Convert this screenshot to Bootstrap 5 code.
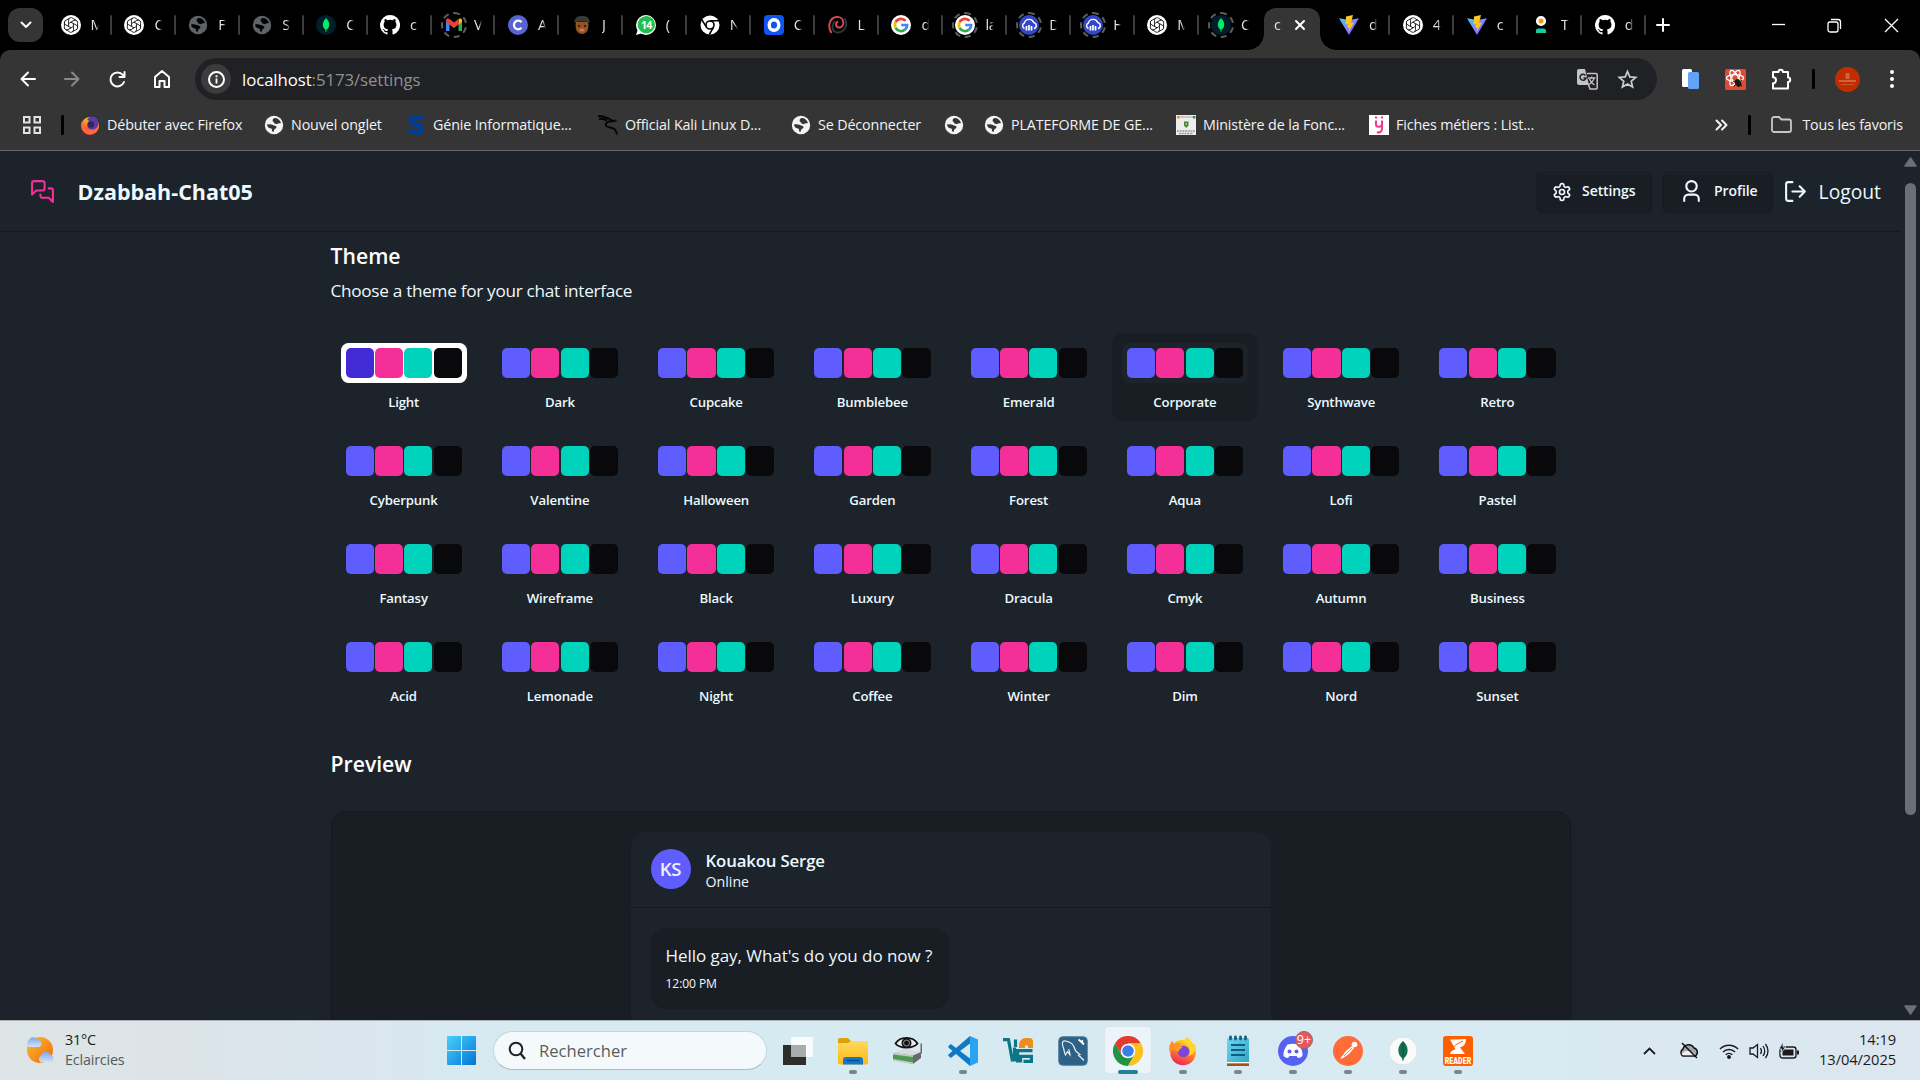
<!DOCTYPE html>
<html lang="fr" data-bs-theme="dark">
<head>
<meta charset="utf-8">
<title>Dzabbah-Chat05</title>
<link href="https://cdn.jsdelivr.net/npm/bootstrap@5.3.0/dist/css/bootstrap.min.css" rel="stylesheet">
<style>
body{width:1920px;height:1080px;overflow:hidden;font-family:"Open Sans","Noto Sans",sans-serif;background:#1d232a;color:#fff;line-height:1.3}
svg{display:block;flex:none;overflow:visible}
.i20{width:20px;height:20px}.i25{width:25px;height:25px}.i30{width:30px;height:30px}
.ln{fill:none;stroke:currentColor;stroke-width:2;stroke-linecap:round;stroke-linejoin:round}
/* browser tab strip */
.tabstrip{height:50px;background:#000}
.tabsearch{width:35px;height:34px;border-radius:12px;background:#353535;margin:8px 5px 8px 8px}
.btab{width:63.93px;height:50px;padding-left:12.5px}
.btab .ttl{width:8px;margin-left:10px;overflow:hidden;font-size:14.5px;color:#e3e3e3;-webkit-mask-image:linear-gradient(90deg,#000 60%,transparent)}
.btab .ttl.narrow{letter-spacing:-.4px;width:9px}
.btab.split::after{content:"";width:2px;height:20px;background:#3c3c3c;margin-left:auto;border-radius:1px}
.asleep{outline:2px dashed #5c5f62;outline-offset:1px;border-radius:50%}
.btab.current{width:56px;margin:8px 6.500px 0 1.430px;height:42px;padding-left:10px;background:#353535;border-radius:12px 12px 0 0;position:relative}
.btab.current .ttl{margin:-8px 0 0}
.btab.current .tabclose{margin:-8px 0 0 13px}
.btab.current::before,.btab.current::after{content:"";position:absolute;bottom:0;width:16px;height:16px}
.btab.current::before{left:-16px;background:radial-gradient(circle at 0 0,#000 15.5px,#353535 16px)}
.btab.current::after{right:-16px;background:radial-gradient(circle at 100% 0,#000 15.5px,#353535 16px)}
.winbtns{gap:41px;margin-right:21px}
/* toolbar and bookmarks */
.chrome-ui{background:#000}
.toolbar-ui{height:58px;background:#353535;border-radius:10px 10px 0 0;padding:0 20px}
.omnibox{width:1462px;height:42px;border-radius:21px;background:#202124;padding:0 20px 0 6px;margin-left:25px}
.site-info{width:30px;height:30px;background:#3c3c3c}
.url{font-size:16.8px;color:#8f9092;letter-spacing:-.08px;margin-left:11px;padding-top:1px}
.url span{color:#fff}
.vbar{width:3px;height:20px;background:#000;border-radius:1px}
.favbar{height:43px;background:#353535;border-bottom:1px solid #666;padding-bottom:9px;font-size:14.3px;color:#f1f3f4;letter-spacing:-.13px}
.fav{gap:7px;white-space:nowrap;height:33px}
.fav span{padding-top:1px}
/* page */
.page{height:869px;overflow:hidden;background:#1d232a;color:#ecf9ff}
.view{width:1901px}
.appnav{height:81px;border-bottom:1px solid #15191e;padding:1px 20px 0 30px}
.brandname{font-size:21.5px;font-weight:700;letter-spacing:0;margin-left:22.5px}
.navbtn{height:40px;background:#191e24;border:1px solid #161a20;border-radius:5px;font-size:14px;font-weight:600;box-shadow:inset 0 1px 0 #21262d,0 2px 3px -1px #15191e80;letter-spacing:-.1px}
.logout{font-size:19.3px}
.content{width:1240px;margin:0 auto;padding-top:7px}
.h-sec{font-size:21.2px;font-weight:600;line-height:34px;margin:0}
.subt{font-size:17.2px;letter-spacing:-.3px;line-height:28px;margin:4px 0 28px}
.themes{display:grid;grid-template-columns:repeat(8,1fr);gap:10px;margin-bottom:32px}
.tile{height:88px;padding:10px;border-radius:10px;text-align:center}
.tile.hov{background:#191e24}
.sw{height:40px;padding:5px;border-radius:7.5px;display:grid;grid-template-columns:repeat(4,1fr);gap:1.25px;background:#1d232a}
.sw i{border-radius:5px}
.sw i:nth-child(1){background:#605dff}.sw i:nth-child(2){background:#f43098}.sw i:nth-child(3){background:#00d3bb}.sw i:nth-child(4){background:#09090b}
.sw.lit{background:#fff}.sw.lit i:nth-child(1){background:#422ad5}
.tname{font-size:13.2px;font-weight:600;line-height:20px;margin-top:9px;letter-spacing:-.15px}
.panel{height:300px;margin-top:30px;background:#191e24;border:1px solid #15191e;border-radius:15px;padding-top:20px;box-shadow:0 12px 19px -4px #0000001a}
.chatcard{width:640px;height:300px;margin:0 auto;background:#1d232a;border-radius:15px}
.chathead{height:76px;padding:0 20px 2px;border-bottom:1px solid #15191e;gap:15px}
.avatar{width:40px;height:40px;background:#605dff;font-size:18.5px;font-weight:600;color:#edf1fe;letter-spacing:-.2px;padding-top:1px}
.chatname{font-size:16.8px;font-weight:600;line-height:23px;letter-spacing:-.15px;padding-top:3px}
.status{font-size:14.2px;line-height:20px}
.bubble{width:298px;height:81px;margin:20px;background:#191e24;border-radius:15px;padding:14px 0 0 15px}
.msg{font-size:17px;line-height:28px;letter-spacing:-.05px}
.when{font-size:12.1px;line-height:20px;margin-top:4px;letter-spacing:-.1px}
.sbar{width:19px;height:869px;padding:6px 0 0 3px}
.thumb{width:11px;height:632px;border-radius:6px;background:#6b6f76;margin:16px 0 190px 1px}
/* windows taskbar */
.taskbar{height:60px;border-top:1px solid #aab2b6;background:linear-gradient(90deg,#dde5e6 0,#dce4e9 200px,#dae6ee 340px,#d6eaf2 520px,#d8eaf2 1500px,#dce6ef 1920px);color:#1b1b1b}
.weather{width:447px;padding:0 0 2px 25px;font-size:14.4px;line-height:20px;letter-spacing:-.2px}
.search{width:274px;height:39px;border-radius:20px;background:#f4f9fb;border:1px solid #c3d6dd;border-bottom-color:#a8bcc4;margin:0 11px 0 17px;padding-left:14px;font-size:16.6px;color:#5a5d5f}
.apps{margin-left:-8px}
.app{width:55px;height:59px;position:relative}
.app.run::after{content:"";position:absolute;bottom:6px;left:23.5px;width:8px;height:4px;border-radius:2px;background:#7d8588}
.app.front::before{content:"";position:absolute;inset:5px 3.5px 6px;background:#ecf4fa;border:1px solid #dbe6ec;border-radius:5px}
.app.front::after{left:17.5px;width:20px;background:#238193}
.app svg{position:relative}
.clock{font-size:14.7px;line-height:20px;text-align:right;width:92px;letter-spacing:-.1px;margin:-3px 0 0 5px}
</style>
<script src="https://cdn.jsdelivr.net/npm/bootstrap@5.3.0/dist/js/bootstrap.bundle.min.js"></script>
</head>
<body>
<svg width="0" height="0" class="position-absolute">
<defs>
<linearGradient id="gv" x1="0" y1="0" x2="1" y2="1"><stop offset="0" stop-color="#41d1ff"/><stop offset="1" stop-color="#bd34fe"/></linearGradient>
<linearGradient id="gw" x1="0" y1="0" x2="1" y2="1"><stop offset="0" stop-color="#4bd0fb"/><stop offset="1" stop-color="#0275d4"/></linearGradient>
<linearGradient id="gf" x1=".7" y1="0" x2=".3" y2="1"><stop offset="0" stop-color="#ffe226"/><stop offset=".45" stop-color="#ff8a1f"/><stop offset="1" stop-color="#ef1d62"/></linearGradient>
<linearGradient id="gfo" x1="0" y1="0" x2="0" y2="1"><stop offset="0" stop-color="#ffd95e"/><stop offset="1" stop-color="#fbb914"/></linearGradient>
<linearGradient id="gs" x1="0" y1="0" x2="1" y2="1"><stop offset="0" stop-color="#f9c22e"/><stop offset="1" stop-color="#f3650d"/></linearGradient>
<linearGradient id="gc" x1="0" y1="0" x2="0" y2="1"><stop offset="0" stop-color="#7fa6e6"/><stop offset="1" stop-color="#d3e2fa"/></linearGradient>
<linearGradient id="gn" x1="0" y1="0" x2="1" y2="1"><stop offset="0" stop-color="#6fd7ee"/><stop offset="1" stop-color="#2fa3c4"/></linearGradient>
</defs>
<symbol id="gpt" viewBox="0 0 20 20"><circle cx="10" cy="10" r="10" fill="#fff"/><g fill="none" stroke="#111" stroke-width=".85"><g id="gp"><path d="M10 7.2 7.5 8.7V5.2a2.6 2.6 0 0 1 4.6-1.6l3 1.8"/></g><use href="#gp" transform="rotate(60 10 10)"/><use href="#gp" transform="rotate(120 10 10)"/><use href="#gp" transform="rotate(180 10 10)"/><use href="#gp" transform="rotate(240 10 10)"/><use href="#gp" transform="rotate(300 10 10)"/></g></symbol>
<symbol id="globe" viewBox="0 0 20 20"><circle cx="10" cy="10" r="9.200" fill="currentColor"/><path d="M10.500 3C14 3 16 5 17 8c-1.500.7-2.500 0-3.500.8-1 .7-2.800.5-3.200-.8C9.800 6.500 8.500 6.800 8.600 5.200 8.700 4 9.500 3.500 10.500 3zM3 9.500c2-.4 4.500-.3 6 .6 1.300.8 2.800.4 3.400 1.600.5 1.200-.7 1.800-1.600 2.200-1 .5-.6 1.900-1.500 3.100-1.600-.4-1.300-2-1.500-3.200C5 13.500 3.200 12 3 9.500z" fill="var(--gb,#353535)"/></symbol>
<symbol id="mongo" viewBox="0 0 20 20"><circle cx="10" cy="10" r="10" fill="#001e2b"/><path d="M10 3c2.600 2.600 3.500 4.800 3.200 7.200-.2 2-1.300 3.500-2.700 4.500L10.200 17h-.5l-.2-2.300C8 13.600 7 12.100 6.800 10.200 6.600 7.600 8 5.400 10 3z" fill="#00ed64"/></symbol>
<symbol id="github" viewBox="0 0 16 16"><path fill="#fff" d="M8 0a8 8 0 0 0-2.530 15.590c.4.070.55-.17.55-.38v-1.490c-2.010.37-2.530-.49-2.690-.94-.09-.23-.48-.94-.82-1.130-.28-.15-.68-.52-.01-.53.630-.01 1.080.58 1.230.82.720 1.210 1.870.870 2.330.66.070-.52.280-.870.510-1.070-1.780-.2-3.640-.890-3.640-3.950 0-.870.310-1.590.820-2.150-.08-.2-.36-1.020.080-2.120 0 0 .670-.210 2.200.820a7.400 7.400 0 0 1 4 0c1.530-1.040 2.200-.82 2.200-.82.440 1.100.160 1.920.080 2.120.510.560.820 1.270.820 2.150 0 3.070-1.870 3.750-3.650 3.950.290.250.540.730.540 1.480v2.200c0 .210.150.460.550.38A8 8 0 0 0 8 0z"/></symbol>
<symbol id="gmail" viewBox="0 0 20 20"><path d="M2 5v11h3.500V8z" fill="#4285f4"/><path d="M18 5v11h-3.500V8z" fill="#34a853"/><path d="M14.500 9.500 18 7V5.200c0-1.700-2-2.400-3.500-1.200z" fill="#fbbc04"/><path d="M2 5.200C2 3.500 4 2.800 5.500 4L10 7.500 14.500 4v5.500L10 13 2 7z" fill="#ea4335"/></symbol>
<symbol id="cc" viewBox="0 0 20 20"><circle cx="10" cy="10" r="10" fill="#5865d0"/><path d="M13.500 7.200A4.300 4.300 0 1 0 13.500 12.800" fill="none" stroke="#fff" stroke-width="2.200"/></symbol>
<symbol id="jface" viewBox="0 0 20 20"><path d="M4 7c-1.500 7 1 12 6 12s7.500-5 6-12z" fill="#935321"/><path d="M2 7.500C3 2 6 1 10 1s7 1 8 6.500c-5-1.500-11-1.500-16 0z" fill="#3a3937"/><circle cx="7" cy="11" r="1" fill="#111"/><circle cx="13" cy="11" r="1" fill="#111"/><path d="M7 15q3-3 6 0-3 3-6 0" fill="#d2775b"/></symbol>
<symbol id="wa" viewBox="0 0 20 20"><circle cx="10" cy="10" r="10" fill="#fff"/><path d="m0 20 2-6 5 4z" fill="#fff"/><circle cx="10.300" cy="9.700" r="8.700" fill="#1fc14e"/><text x="10.300" y="13.500" font-size="10.500" font-weight="700" text-anchor="middle" fill="#fff" letter-spacing="-.6">14</text></symbol>
<symbol id="chromew" viewBox="0 0 20 20"><circle cx="10" cy="10" r="9.500" fill="#fff"/><circle cx="10" cy="10" r="4" fill="#fff" stroke="#000" stroke-width="1.600"/><path d="M10 5.800h9M6.400 12.200 1.700 4.500M13.600 12.200 9.300 19.500" stroke="#000" stroke-width="1.500"/></symbol>
<symbol id="blueo" viewBox="0 0 20 20"><rect width="20" height="20" rx="4" fill="#0f56ee"/><ellipse cx="10" cy="10" rx="4.800" ry="5.300" fill="none" stroke="#fff" stroke-width="3.400"/></symbol>
<symbol id="swirl" viewBox="0 0 20 20"><g fill="none" stroke-width="1.900"><path d="M3.500 18C-.5 12 1 3 8.500 2c8-1 9 10.500 2.500 10.500-3.500 0-4-5-1-6" stroke="#e0494c"/><path d="M16.500 3.500c4 6 .5 14.500-7.500 14C4 17 3 9.500 7 6.500" stroke="#2b3944"/></g></symbol>
<symbol id="google" viewBox="0 0 20 20"><circle cx="10" cy="10" r="10" fill="#fff"/><g fill="none" stroke-width="2.700"><path d="M14.600 5.900A6.100 6.100 0 0 0 4.700 7" stroke="#ea4335"/><path d="M4.700 7a6.100 6.100 0 0 0 0 6" stroke="#fbbc05"/><path d="M4.700 13a6.100 6.100 0 0 0 9.300 1.600" stroke="#34a853"/><path d="M14 14.600A6 6 0 0 0 16.100 10H10.200" stroke="#4285f4"/></g></symbol>
<symbol id="cloudb" viewBox="0 0 20 20"><circle cx="10" cy="10" r="10" fill="#3448c5"/><path d="M5.500 13.500a3 3 0 0 1-.2-5.500 5 5 0 0 1 9.500-.4 3 3 0 0 1 0 5.900" fill="none" stroke="#fff" stroke-width="1.400"/><path d="M7.500 11v4.500M10 10v5.500M12.500 11v4.500" stroke="#fff" stroke-width="1.700"/></symbol>
<symbol id="vite" viewBox="0 0 20 20"><path d="M0 3.300 10 20 20 3.300 10 5z" fill="url(#gv)"/><path d="M14 0 7 1.400 6.500 9.500 9 9l-.8 4.300L10.400 12.500 9.500 17 15 7.500l-3 .6z" fill="#ffc820"/></symbol>
<symbol id="person" viewBox="0 0 20 20"><circle cx="10" cy="6" r="3.800" fill="#f79a12" stroke="#fff" stroke-width="2.600"/><path d="M5 18v-2a2.500 2.500 0 0 1 2.500-2.500h5A2.500 2.500 0 0 1 15 16v2z" fill="#1bc9a0"/></symbol>
<symbol id="ffox" viewBox="0 0 30 30"><circle cx="15" cy="16.500" r="12.800" fill="url(#gf)"/><path d="M1.500 16C.5 11 2 7 4.500 4.500c.3 2 1 3 2 3.500C9 7 12 7 13 8z" fill="#ff9122"/><path d="M18 1c-2 4-1 6 1 8 4 3 4 8 1 11 8-2 10-9 5.500-13l-.5 2c-1-4-3-6-7-8z" fill="#ffd52b"/><circle cx="15.500" cy="15.500" r="5.800" fill="#7a45d8"/><path d="M5 12c5-3 8-2 10 0-3 0-3 2-5 4" fill="#ff9a28"/></symbol>
<symbol id="ffold" viewBox="0 0 20 20"><circle cx="10" cy="11" r="9" fill="url(#gf)"/><path d="M7 5C10-1 19 1 18.500 9c-.5 5-5 7-9 5-3-2-3-6 0-8z" fill="#5c3aa8"/><circle cx="11" cy="9.500" r="3.300" fill="#33265e"/><path d="M2 6c1 4 2 9 9 9 4 0 7-3 8-6 0 7-5 10.500-9 10.500C4 19.500 0 13 2 6z" fill="#ff6b3a"/></symbol>
<symbol id="chrome" viewBox="0 0 30 30"><path d="M2 7.500A15 15 0 0 1 28 7.500H15l-6.500 11.200z" fill="#e33b2e"/><path d="M2 7.500A15 15 0 0 0 15 30l6.500-11.200H8.500z" fill="#229342"/><path d="M15 30a15 15 0 0 0 13-22.500H15l6.500 11.200z" fill="#fcc21b"/><circle cx="15" cy="15" r="7.300" fill="#fff"/><circle cx="15" cy="15" r="5.800" fill="#3b7ded"/></symbol>
</svg>

<header class="chrome-ui">
  <div class="tabstrip d-flex align-items-center">
    <div class="tabsearch d-flex align-items-center justify-content-center"><svg width="12" height="8" viewBox="0 0 12 8"><path d="m1.500 1.500 4.500 4.500 4.500-4.500" class="ln"/></svg></div>
    <div id="tabs" class="d-flex"></div>
    <svg width="14" height="14" viewBox="0 0 14 14" class="ms-2"><path d="M9 1v12M3 7h12" class="ln"/></svg>
    <div class="winbtns ms-auto d-flex align-items-center">
      <svg width="15" height="15" viewBox="0 0 15 15"><path d="M0 6.500h13" stroke="#fff" stroke-width="1.300"/></svg>
      <svg width="15" height="15" viewBox="0 0 15 15" fill="none" stroke="#fff" stroke-width="1.300"><rect x="0" y="4" width="10" height="10" rx="2"/><path d="M3 1.500h7A2.500 2.500 0 0 1 12.500 4v7"/></svg>
      <svg width="15" height="15" viewBox="0 0 15 15"><path d="m1 1 13 13M14 1 1 14" stroke="#fff" stroke-width="1.300"/></svg>
    </div>
  </div>
  <div class="toolbar-ui d-flex align-items-center">
    <svg width="16" height="16" viewBox="0 0 16 16" class="ln"><path d="M15 8H1.500M8 1.500 1.500 8 8 14.500"/></svg>
    <svg width="16" height="16" viewBox="0 0 16 16" class="ln" style="margin-left:28px;color:#8a8a8a"><path d="M1 8h13.500M8 1.500 14.500 8 8 14.500"/></svg>
    <svg width="17" height="17" viewBox="0 0 17 17" class="ln" style="margin-left:29px"><path d="M15 11a7 7 0 1 1-1.200-7.200L15.500 5.500M15.500 1v5h-5"/></svg>
    <svg width="16" height="18" viewBox="0 0 16 18" class="ln" style="margin-left:28px"><path d="M1 7 8 1l7 6v10h-4.500v-6h-5v6H1z"/></svg>
    <div class="omnibox d-flex align-items-center">
      <div class="site-info rounded-circle d-flex align-items-center justify-content-center"><svg width="17" height="17" viewBox="0 0 17 17"><circle cx="8.500" cy="8.500" r="7.500" class="ln"/><path d="M8.500 7.500v5M8.500 4.300v2" stroke="#fff" stroke-width="1.800"/></svg></div>
      <div class="url"><span>localhost</span>:5173/settings</div>
      <svg class="ms-auto" width="21" height="21" viewBox="0 0 21 21"><path d="M0 2a2 2 0 0 1 2-2h6l4 16H2a2 2 0 0 1-2-2z" fill="#c4c4c4"/><path d="M8.500 6.500A3 3 0 1 0 9 9H6.500" fill="none" stroke="#202124" stroke-width="1.500"/><path d="M10 4.500h9a1.200 1.200 0 0 1 1.200 1.200v13a1.200 1.200 0 0 1-1.200 1.200h-6l-1.500-4" fill="none" stroke="#c4c4c4" stroke-width="1.500"/><path d="M11 9h7.500M14.700 7.500V9M17 9c-.5 3-3 5-5 6.500M12.500 10c1 3 2.500 4.500 5 6" fill="none" stroke="#c4c4c4" stroke-width="1.300"/></svg>
      <svg style="margin-left:20px" width="19" height="19" viewBox="0 0 19 19"><path d="m9.500 1.500 2.300 5.400 5.900.5-4.500 3.900 1.400 5.700-5.100-3.100L4.400 17l1.400-5.700-4.500-3.900 5.900-.5z" fill="none" stroke="#ccc" stroke-width="1.700"/></svg>
    </div>
    <svg style="margin-left:25px" width="17" height="20" viewBox="0 0 17 20"><rect width="10" height="18" rx="1.500" fill="#fff"/><rect x="6" y="3" width="11" height="17" rx="1.500" fill="#63a2f8"/></svg>
    <svg style="margin-left:26px" width="21" height="21" viewBox="0 0 21 21"><rect width="21" height="21" rx="1.500" fill="#dc4a38"/><g fill="none" stroke="#fff" stroke-width="1.300"><ellipse cx="10" cy="9" rx="8.500" ry="3.300"/><ellipse cx="10" cy="9" rx="8.500" ry="3.300" transform="rotate(60 10 9)"/><ellipse cx="10" cy="9" rx="8.500" ry="3.300" transform="rotate(120 10 9)"/></g><ellipse cx="13" cy="14" rx="3" ry="4" fill="#1b1211" transform="rotate(-30 13 14)"/><path d="M8 12l9 5M9 17l8-6" stroke="#1b1211"/></svg>
    <svg style="margin-left:25px" width="21" height="22" viewBox="0 0 21 22"><path d="M2 4h5.500a2.200 2.200 0 0 1 4.400 0H17v5.500a2.200 2.200 0 0 1 0 4.400V20.500H2v-5.200a3 3 0 0 0 0-6z" class="ln"/></svg>
    <div class="vbar" style="margin-left:20px"></div>
    <svg style="margin-left:20px" width="25" height="25" viewBox="0 0 25 25"><circle cx="12.500" cy="12.500" r="12.500" fill="#c22d00"/><path d="M10.500 7h4M10.500 9h4M10.500 11h4M4 14h17" stroke="#e8a48e" stroke-width=".9"/><path d="M6 17.500h13" stroke="#d9694a" stroke-width=".7"/></svg>
    <svg style="margin-left:30px" width="4" height="18" viewBox="0 0 4 18" fill="#fff"><circle cx="2" cy="2" r="2"/><circle cx="2" cy="9" r="2"/><circle cx="2" cy="16" r="2"/></svg>
  </div>
  <div class="favbar d-flex align-items-center">
    <svg style="margin:0 20px 0 23px" width="18" height="18" viewBox="0 0 18 18" fill="none" stroke="#e3e3e3" stroke-width="2"><path d="M1 1h5.500v5.500H1zM11.500 1H17v5.500h-5.500zM1 11.500h5.500V17H1zM11.500 11.500H17V17h-5.500z"/></svg>
    <div class="vbar"></div>
    <div class="fav d-flex align-items-center" style="width:184px;margin-left:16px"><svg class="i20"><use href="#ffold"/></svg><span>Débuter avec Firefox</span></div>
    <div class="fav d-flex align-items-center" style="width:142px"><svg class="i20"><use href="#globe"/></svg><span>Nouvel onglet</span></div>
    <div class="fav d-flex align-items-center" style="width:192px"><svg class="i20" viewBox="0 0 20 20"><path d="M17 4.500C15 2 5 .8 4.500 5.500 4.500 11 15.500 8 15.500 14c0 5-9.500 4-12.500 1" fill="none" stroke="#003d96" stroke-width="4.500"/></svg><span>Génie Informatique...</span></div>
    <div class="fav d-flex align-items-center" style="width:193px"><svg class="i20" viewBox="0 0 20 20"><path d="M0 1c4.500 0 7.500 1 9.500 3M1 4c3-.5 5.500 0 8 1.500M9 2.500l6 3.500 3.500-.5M15 6.500C10 5.500 7 8 8 10.500s7 1.500 9 4c1 1.500 1.500 3 2 5" fill="none" stroke="#050505" stroke-width="1.900"/></svg><span>Official Kali Linux D...</span></div>
    <div class="fav d-flex align-items-center" style="width:153px"><svg class="i20"><use href="#globe"/></svg><span>Se Déconnecter</span></div>
    <div class="fav d-flex align-items-center" style="width:40px"><svg class="i20"><use href="#globe"/></svg></div>
    <div class="fav d-flex align-items-center" style="width:192px"><svg class="i20"><use href="#globe"/></svg><span>PLATEFORME DE GE...</span></div>
    <div class="fav d-flex align-items-center" style="width:193px"><svg class="i20" viewBox="0 0 20 20"><path fill="#eee" d="M0 0h20v20H0z"/><path d="M3 2h14" stroke="#aaa" stroke-width="1.600" stroke-dasharray="1.500 .6"/><path fill="#f68b1f" d="M1 1h2.500v2.500H1z"/><path fill="#2a9b4b" d="M17 1h2.500v2.500H17z"/><path fill="#3f8d3d" d="M8 6.500h4.500v4L10.200 13 8 10.500z"/><path fill="#e0b12b" d="M9.500 8h1.500v2H9.500z"/><path d="M1 16h18M3 18.500h14" stroke="#999" stroke-width="1.500" stroke-dasharray="2 .7"/></svg><span>Ministère de la Fonc...</span></div>
    <div class="fav d-flex align-items-center"><svg class="i20" viewBox="0 0 20 20"><path fill="#fff" d="M0 0h20v20H0z"/><path d="M7 5.500v4c0 3 5 3 6 0v-4 8.500c0 3-3 4-5 3" fill="none" stroke="#ec3c8b" stroke-width="2"/><path d="M6 1.500h2.200v2H6zM11.800 1.500H14v2h-2.200z" fill="#ec3c8b"/></svg><span>Fiches métiers : List...</span></div>
    <svg class="ms-auto" width="13" height="12" viewBox="0 0 13 12"><path d="M2.500 1.500 7 6l-4.500 4.500M8 1.500 12.500 6 8 10.500" class="ln"/></svg>
    <div class="vbar" style="margin:0 20px 0 21px"></div>
    <svg width="21" height="17" viewBox="0 0 21 17"><path d="M1 3a2 2 0 0 1 2-2h5l2.500 2.500H18a2 2 0 0 1 2 2V14a2 2 0 0 1-2 2H3a2 2 0 0 1-2-2z" fill="none" stroke="#c7c7c7" stroke-width="1.800"/></svg>
    <div style="margin:1px 17px 0 10px">Tous les favoris</div>
  </div>
</header>

<main class="page d-flex">
  <div class="view">
    <nav class="appnav d-flex align-items-center">
      <svg class="i25 ln" viewBox="0 0 24 24" style="color:#f43098"><path d="M14 9a2 2 0 0 1-2 2H6l-4 4V4a2 2 0 0 1 2-2h8a2 2 0 0 1 2 2z"/><path d="M18 9h2a2 2 0 0 1 2 2v11l-4-4h-6a2 2 0 0 1-2-2v-1"/></svg>
      <div class="brandname">Dzabbah-Chat05</div>
      <a class="navbtn d-flex align-items-center text-reset text-decoration-none ms-auto" style="width:115px;padding-left:14px"><svg class="i20 ln" viewBox="0 0 24 24"><path d="M12.220 2h-.440a2 2 0 0 0-2 2v.180a2 2 0 0 1-1 1.730l-.430.250a2 2 0 0 1-2 0l-.150-.080a2 2 0 0 0-2.730.730l-.220.380a2 2 0 0 0 .730 2.730l.150.100a2 2 0 0 1 1 1.720v.510a2 2 0 0 1-1 1.740l-.150.090a2 2 0 0 0-.730 2.730l.220.380a2 2 0 0 0 2.730.730l.150-.080a2 2 0 0 1 2 0l.430.250a2 2 0 0 1 1 1.730V20a2 2 0 0 0 2 2h.440a2 2 0 0 0 2-2v-.180a2 2 0 0 1 1-1.730l.430-.250a2 2 0 0 1 2 0l.150.080a2 2 0 0 0 2.730-.730l.220-.390a2 2 0 0 0-.730-2.730l-.150-.080a2 2 0 0 1-1-1.740v-.500a2 2 0 0 1 1-1.740l.150-.090a2 2 0 0 0 .730-2.730l-.220-.380a2 2 0 0 0-2.730-.730l-.150.080a2 2 0 0 1-2 0l-.430-.250a2 2 0 0 1-1-1.730V4a2 2 0 0 0-2-2z"/><circle cx="12" cy="12" r="3"/></svg><span style="margin-left:10px">Settings</span></a>
      <a class="navbtn d-flex align-items-center text-reset text-decoration-none" style="width:110px;margin-left:11px;padding-left:15px"><svg class="i25 ln" viewBox="0 0 24 24"><circle cx="12" cy="7" r="5"/><path d="M19 21v-2a4 4 0 0 0-4-4H9a4 4 0 0 0-4 4v2"/></svg><span style="margin-left:10px">Profile</span></a>
      <a class="logout d-flex align-items-center text-reset text-decoration-none" style="margin-left:10px"><svg class="i25 ln" viewBox="0 0 24 24"><path d="M9 21H5a2 2 0 0 1-2-2V5a2 2 0 0 1 2-2h4M16 17l5-5-5-5M21 12H9"/></svg><span style="margin:1px 0 0 10.500px">Logout</span></a>
    </nav>
    <section class="content">
      <h2 class="h-sec">Theme</h2>
      <p class="subt">Choose a theme for your chat interface</p>
      <div class="themes" id="themes"></div>
      <h2 class="h-sec">Preview</h2>
      <div class="panel">
        <div class="chatcard">
          <div class="chathead d-flex align-items-center">
            <div class="avatar rounded-circle d-flex align-items-center justify-content-center">KS</div>
            <div><div class="chatname">Kouakou Serge</div><div class="status">Online</div></div>
          </div>
          <div class="bubble"><div class="msg">Hello gay, What's do you do now ?</div><div class="when">12:00 PM</div></div>
        </div>
      </div>
    </section>
  </div>
  <div class="sbar">
    <svg width="13" height="10" viewBox="0 0 13 10"><path d="M6.500 1 12 9H1z" fill="#6b6f76" stroke="#6b6f76" stroke-width="1.500" stroke-linejoin="round"/></svg>
    <div class="thumb"></div>
    <svg width="13" height="10" viewBox="0 0 13 10"><path d="M6.500 9 12 1H1z" fill="#6b6f76" stroke="#6b6f76" stroke-width="1.500" stroke-linejoin="round"/></svg>
  </div>
</main>

<footer class="taskbar d-flex align-items-center">
  <div class="weather d-flex align-items-center">
    <svg class="i30" viewBox="0 0 30 30"><circle cx="15" cy="15" r="13" fill="url(#gs)"/><path d="M4 12a4 4 0 0 1 0-7 4.600 4.600 0 0 1 8.500 0 3.600 3.600 0 0 1 1.500 7z" fill="url(#gc)"/><path d="M16 27.500a4 4 0 0 1 0-7 5 5 0 0 1 9.500-.5 4 4 0 0 1 1 7.500z" fill="url(#gc)"/></svg>
    <div style="margin-left:10px">31°C<div style="color:#54595b">Eclaircies</div></div>
  </div>
  <svg width="29" height="29" viewBox="0 0 29 29"><path d="M1 0h13v14H0V1a1 1 0 0 1 1-1zM15 0h13a1 1 0 0 1 1 1v13H15zM0 15h14v14H1a1 1 0 0 1-1-1zM15 15h14v13a1 1 0 0 1-1 1H15z" fill="url(#gw)"/></svg>
  <div class="search d-flex align-items-center"><svg width="18" height="19" viewBox="0 0 18 19"><circle cx="8" cy="8" r="6.300" fill="none" stroke="#222" stroke-width="2"/><path d="m12.500 12.500 4.500 5.500" stroke="#222" stroke-width="2.300"/></svg><span style="margin-left:13px">Rechercher</span></div>
  <div class="apps d-flex">
    <div class="app d-flex align-items-center justify-content-center"><svg class="i30" viewBox="0 0 30 30"><path d="M0 9h23v20H0z" fill="#2d2d2c"/><rect x="8" y="1" width="22" height="20" rx="1" fill="#fff" opacity=".85"/><path d="M8 9h15v12H8z" fill="#a9acad"/></svg></div>
    <div class="app run d-flex align-items-center justify-content-center"><svg class="i30" viewBox="0 0 30 30"><path d="M0 4a2 2 0 0 1 2-2h8l3 3h15a2 2 0 0 1 2 2v4H0z" fill="#e0a008"/><path d="M0 7h10l3-2h17v21.500a2 2 0 0 1-2 2H2a2 2 0 0 1-2-2z" fill="url(#gfo)"/><path d="M5 28.500V24a3 3 0 0 1 3-3h14a3 3 0 0 1 3 3v4.500z" fill="#1277cf"/><path d="M9 24.500h12" stroke="#0a4c94" stroke-width="1.500" stroke-linecap="round"/></svg></div>
    <div class="app d-flex align-items-center justify-content-center"><svg class="i30" viewBox="0 0 30 30"><path d="m0 17 12-4 16 3-7 5z" fill="#d9dcda"/><path d="m0 17 20 2.500V28L0 24z" fill="#4e9a52"/><path d="m0 23 20 3.500V28L0 25zM0 17l20 2.500v1.500L0 18.500z" fill="#c9cdca"/><path d="m20 19.500 8-3.500v6l-8 6zM27.500 7.500H29v10h-1.500z" fill="#666a69"/><path d="M2.500 7.500C7 0 20 0 24.500 7.500 20 13 7 13 2.500 7.500z" fill="#eee" stroke="#111" stroke-width="1.800"/><circle cx="13.500" cy="7" r="5" fill="#111"/><circle cx="13.500" cy="7" r="3" fill="none" stroke="#999"/></svg></div>
    <div class="app run d-flex align-items-center justify-content-center"><svg class="i30" viewBox="0 0 30 30"><path d="M0 10.500 2.800 8 22 22.500V30L1 12z" fill="#0a7cc9"/><path d="M0 19.500 2.800 22 22 7.500V0L1 18z" fill="#1278c0"/><path d="m22 0 8 3.500v23L22 30z" fill="#2aa4f0"/></svg></div>
    <div class="app d-flex align-items-center justify-content-center"><svg class="i30" viewBox="0 0 30 30" fill="none" stroke="#0b7688" stroke-width="3.200"><path d="M12.500 11V3.600M0 3.600h5.500L9.500 25.500M11.500 11.500v14"/><path d="M0 2h6l4.500 22L13 10.500V2h-2.500" stroke="none"/><path d="M29.500 14.600H14.600V24.900h3v-4.500h10.800v5H20.500" /><path d="M16 8.500a6.500 6.500 0 0 1 6.500-6.500h3.500a4 4 0 0 1 4 4v6h-5V9.500h-3V12h-6z" fill="#f08c1c" stroke="none"/></svg></div>
    <div class="app d-flex align-items-center justify-content-center"><svg class="i30" viewBox="0 0 30 30"><rect x=".7" y=".7" width="28.600" height="28.600" rx="4" fill="#2e6185" stroke="#4f83a3"/><path d="M5.500 12C3.500 8 4 4.500 7.500 5c5.500.8 8.500 4 9.500 8.500.6 2.500 2.500 3.500 5 5l-1.500.8 2.500 2.200 3 3M5.500 12c.8 2 .5 4.500 2 7l2-3.500 2.500 3.500c0-3-1.500-4.500-1-6" fill="none" stroke="#e8f2f8" stroke-width="1.200"/><path d="m20.500 3.500 3 2.500 1.500-1.500M23.500 6l2.500 2.500" stroke="#fff" stroke-width="1.800" fill="none"/></svg></div>
    <div class="app run front d-flex align-items-center justify-content-center"><svg class="i30"><use href="#chrome"/></svg></div>
    <div class="app run d-flex align-items-center justify-content-center"><svg class="i30"><use href="#ffox"/></svg></div>
    <div class="app run d-flex align-items-center justify-content-center"><svg class="i30" viewBox="0 0 30 30"><rect x="4" y="2" width="22" height="26" rx="1.500" fill="url(#gn)"/><path d="M4 26h22v1.500H4z" fill="#fff"/><path d="M4 27.500h22V30H4z" fill="#a3540c"/><path d="M8 9h14M8 14h14M8 19h14" stroke="#0c5e86" stroke-width="2"/><path d="M7.500 1v2M12.500 1v2M17.500 1v2M22.500 1v2" stroke="#155f80" stroke-width="2.800" stroke-linecap="round"/></svg></div>
    <div class="app run d-flex align-items-center justify-content-center"><svg class="i30" viewBox="0 0 30 30"><circle cx="15" cy="15" r="15" fill="#5662f2"/><path d="M9.500 8.500q5.500-1.500 11 0Q25 14 24.500 20q-2 2-4.500 2l-1.500-2h-7L10 22q-2.500 0-4.500-2Q5 14 9.500 8.500z" fill="#fff"/><circle cx="11.500" cy="15.500" r="2" fill="#5662f2"/><circle cx="18.500" cy="15.500" r="2" fill="#5662f2"/><circle cx="26" cy="4" r="8.500" fill="#e9575a" stroke="#8c6b74"/><text x="26" y="8.300" font-size="12.500" text-anchor="middle" fill="#fff">9+</text></svg></div>
    <div class="app run d-flex align-items-center justify-content-center"><svg class="i30" viewBox="0 0 30 30"><circle cx="15" cy="15" r="15" fill="#ff6c37"/><path d="m7 23 6-8 6-5 2 2-5 6-6 4z" fill="#fff"/><circle cx="21.500" cy="8.500" r="2.800" fill="#fff"/><path d="m11 20 8-8" stroke="#ff6c37" stroke-width=".9"/></svg></div>
    <div class="app run d-flex align-items-center justify-content-center"><svg class="i30" viewBox="0 0 30 30"><circle cx="15" cy="15" r="14" fill="#fafafa" stroke="#dde3e5"/><path d="M15 5c4 4 5 7 4.500 11-.5 3-2 5-4 6.500l-.2 2.500h-.6l-.2-2.500c-2-1.500-3.700-3.500-4-6.500C10 12 11 9 15 5z" fill="#13724e"/><path d="M15 6v18" stroke="#064a35" stroke-width=".8"/></svg></div>
    <div class="app run d-flex align-items-center justify-content-center"><svg class="i30" viewBox="0 0 30 30"><rect width="30" height="30" rx="3" fill="#ff5f00"/><path d="M7 3.500h7l9-.5c0 4-2 7.500-6 8.500l5 6.500H7c.5-2.500 2.500-4 5.500-4.500z" fill="#fff"/><path d="M6 16.500C10 10 14 8 20 5" stroke="#ff5f00" fill="none"/><text x="15" y="27.500" font-size="9.500" font-family="Roboto" font-weight="900" text-anchor="middle" fill="#fff" textLength="26.500" lengthAdjust="spacingAndGlyphs">READER</text></svg></div>
  </div>
  <div class="ms-auto d-flex align-items-center" style="margin-right:24px">
    <svg width="13" height="8" viewBox="0 0 13 8" fill="none" stroke="#1b1b1b" stroke-width="1.800"><path d="M1 7 6.500 1.500 12 7"/></svg>
    <svg style="margin-left:23px" width="20" height="17" viewBox="0 0 20 17"><path d="M4 14a4 4 0 0 1 0-7 6 6 0 0 1 11-1 4.300 4.300 0 0 1 1 8z" fill="#a5a9ab" stroke="#111" stroke-width="1.500"/><path d="M2.500 12c3-4 10-4 14 .8l-1 .5H4z" fill="#f0f0f0"/><path d="m3 1 15 15" stroke="#111" stroke-width="1.500"/></svg>
    <svg style="margin-left:20px" width="20" height="16" viewBox="0 0 20 16" fill="none" stroke="#1b1b1b" stroke-width="1.500"><path d="M1 6a12.700 12.700 0 0 1 18 0M4 9a8.500 8.500 0 0 1 12 0M6.700 11.800a4.700 4.700 0 0 1 6.600 0"/><circle cx="10" cy="14" r="1.200" fill="#1b1b1b"/></svg>
    <svg style="margin-left:10px" width="20" height="18" viewBox="0 0 20 18" fill="none" stroke="#1b1b1b" stroke-width="1.300"><path d="M1 6h3L8.500 2.500v13L4 12H1zM11.500 6q2 3 0 6M14 4q3.500 5 0 10M16.500 2q5 7 0 14"/></svg>
    <svg style="margin-left:10px" width="20" height="16" viewBox="0 0 20 16"><rect x="1" y="4" width="16" height="11" rx="2.500" fill="none" stroke="#1b1b1b" stroke-width="1.400"/><path d="M3.500 6.500h11v6h-11zM18 7.500h2v4h-2z" fill="#1b1b1b"/><path d="M4-1 0 6h2.800l-1 4.500L6.800 4H4z" fill="#1b1b1b" stroke="#d8eaf2" stroke-width=".8"/></svg>
    <div class="clock">14:19<br>13/04/2025</div>
  </div>
</footer>

<script>
const tabs=[['gpt','M'],['gpt','C'],['globe','F'],['globe','S'],['mongo','C'],['github','c'],['gmail','V',1],['cc','A'],['jface','J'],['wa','('],['chromew','N'],['blueo','C'],['swirl','L'],['google','d'],['google','la',1],['cloudb','D',1],['cloudb','H',1],['gpt','M'],['mongo','C',1],null,['vite','d'],['gpt','4'],['vite','c'],['person','T'],['github','d']];
document.getElementById('tabs').innerHTML=tabs.map((t,n)=>t
 ?`<div class="btab d-flex align-items-center ${n!==18?'split':''}"><svg class="i20 ${t[2]?'asleep':''}" style="${t[0]==='globe'?'color:#5f6368;--gb:#000':''}"><use href="#${t[0]}"/></svg><span class="ttl ${t[1]==='la'?'narrow':''}">${t[1]}</span></div>`
 :`<div class="btab current d-flex align-items-center"><span class="ttl">c</span><svg class="tabclose" width="10" height="10" viewBox="0 0 10 10"><path d="m1 1 8 8M9 1 1 9" class="ln"/></svg></div>`).join('');
const names='Light Dark Cupcake Bumblebee Emerald Corporate Synthwave Retro Cyberpunk Valentine Halloween Garden Forest Aqua Lofi Pastel Fantasy Wireframe Black Luxury Dracula Cmyk Autumn Business Acid Lemonade Night Coffee Winter Dim Nord Sunset'.split(' ');
document.getElementById('themes').innerHTML=names.map(n=>
 `<div class="tile ${n==='Corporate'?'hov':''}"><div class="sw ${n==='Light'?'lit':''}"><i></i><i></i><i></i><i></i></div><div class="tname">${n}</div></div>`).join('');
</script>
</body>
</html>
